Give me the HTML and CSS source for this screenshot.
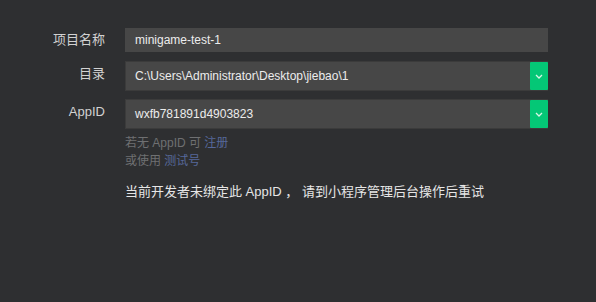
FILE: index.html
```html
<!DOCTYPE html>
<html lang="zh-CN">
  <head>
    <meta charset="UTF-8" />
    <title>项目设置</title>
    <link rel="stylesheet" href="styles.css">
  </head>
  <body>
    <div class="form">
      <div class="row">
        <div class="label">项目名称</div>
        <div class="field text">minigame-test-1</div>
      </div>
      <div class="row tall">
        <div class="label">目录</div>
        <div class="field select">
          <span class="value">C:\Users\Administrator\Desktop\jiebao\1</span>
          <span class="arrow">
            <svg width="8" height="5" viewBox="0 0 8 5"><polyline points="1,1 4,4 7,1" fill="none" stroke="#d8f5e6" stroke-width="1.3"/></svg>
          </span>
        </div>
      </div>
      <div class="row tall">
        <div class="label">AppID</div>
        <div class="field select">
          <span class="value">wxfb781891d4903823</span>
          <span class="arrow">
            <svg width="8" height="5" viewBox="0 0 8 5"><polyline points="1,1 4,4 7,1" fill="none" stroke="#d8f5e6" stroke-width="1.3"/></svg>
          </span>
        </div>
      </div>
      <div class="hints">
        <div>若无 AppID 可 <a class="link">注册</a></div>
        <div>或使用 <a class="link">测试号</a></div>
      </div>
      <div class="warning">当前开发者未绑定此 AppID ， 请到小程序管理后台操作后重试</div>
    </div>
  </body>
</html>
```

FILE: styles.css
```css
body {
    margin: 0;
    background-color: #2e2f31;
    font-family: "Liberation Sans", "Noto Sans CJK SC", sans-serif;
    width: 596px;
    height: 302px;
    overflow: hidden;
}

.form {
    padding-top: 28px;
}

.row {
    display: flex;
    align-items: flex-start;
    margin-bottom: 9px;
}

.row.tall {
    margin-bottom: 8px;
}

.label {
    width: 105px;
    margin-right: 20px;
    text-align: right;
    font-size: 13px;
    line-height: 24px;
    color: #d2d2d2;
}

.row.tall .label {
    padding-top: 1px;
}

.field {
    width: 423px;
    background: #474747;
    color: #ececec;
    font-size: 12px;
    box-sizing: border-box;
}

.text {
    height: 24px;
    line-height: 24px;
    padding-left: 10px;
}

.select {
    height: 30px;
    display: flex;
    align-items: stretch;
    border-top: 1px solid #3b3b3b;
    border-bottom: 1px solid #3b3b3b;
    border-left: 1px solid #3b3b3b;
}

.select .value {
    flex: 1;
    padding-left: 9px;
    line-height: 28px;
}

.arrow {
    width: 18px;
    background: #04c776;
    border-radius: 1px;
    display: flex;
    justify-content: center;
    align-items: center;
}

.hints {
    margin-left: 125px;
    margin-top: -3px;
    font-size: 12px;
    line-height: 18px;
    color: #6f7072;
}

.link {
    color: #56689a;
}

.warning {
    margin-left: 125px;
    margin-top: 11px;
    font-size: 13px;
    color: #e6e6e6;
}
```
